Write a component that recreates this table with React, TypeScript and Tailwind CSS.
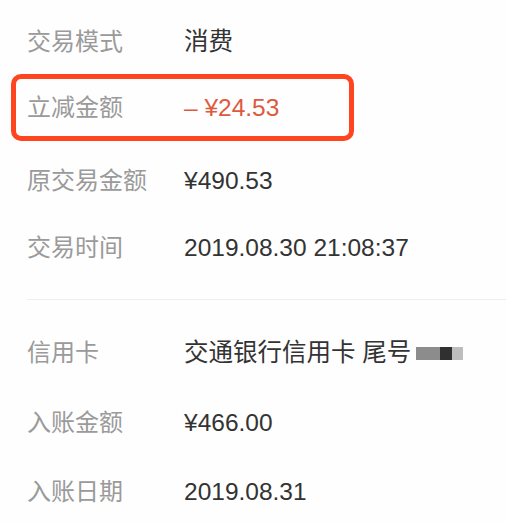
import React from "react";

const font = { fontFamily: '"Liberation Sans", "Noto Sans CJK SC", sans-serif' };

function Row({ label, children, className = "" }: { label: string; children: React.ReactNode; className?: string }) {
  return (
    <div className={`flex items-center h-[68px] pl-[27px] ${className}`}>
      <div className="w-[157px] shrink-0 text-[24px] text-[#9a9a9a]">{label}</div>
      <div className="text-[24.5px] text-[#333333] flex items-center">{children}</div>
    </div>
  );
}

export default function App() {
  return (
    <div className="w-[506px] h-[522px] overflow-hidden bg-[#fefefe] flex flex-col pt-[7px]" style={font}>
      <Row label="交易模式" className="h-[66px] pt-[4px]">消费</Row>
      <div className="ml-[11px] w-[343px] h-[69px] border-[5px] border-[#ff4520] rounded-[10px] flex items-center pl-[11px] pt-[2px]">
        <div className="w-[157px] shrink-0 text-[24px] text-[#9a9a9a]">立减金额</div>
        <div className="text-[24.5px] text-[#dd5a3f]">– ¥24.53</div>
      </div>
      <Row label="原交易金额" className="mt-[5px] pt-[3px]">¥490.53</Row>
      <Row label="交易时间" className="pt-[4px]">2019.08.30 21:08:37</Row>
      <div className="ml-[27px] mt-[20px] h-px bg-[#efefef]" />
      <Row label="信用卡" className="mt-[18px] pt-[3px]">
        <span>交通银行信用卡 尾号</span>
        <span className="ml-[5px] flex h-[13px]">
          <span className="w-[24px] bg-[#8c8c8c]" />
          <span className="w-[12px] bg-[#303030]" />
          <span className="w-[11px] bg-[#bdbdbd]" />
        </span>
      </Row>
      <Row label="入账金额" className="h-[70px] pt-[8px]">¥466.00</Row>
      <Row label="入账日期" className="h-[70px] pt-[9px]">2019.08.31</Row>
    </div>
  );
}
